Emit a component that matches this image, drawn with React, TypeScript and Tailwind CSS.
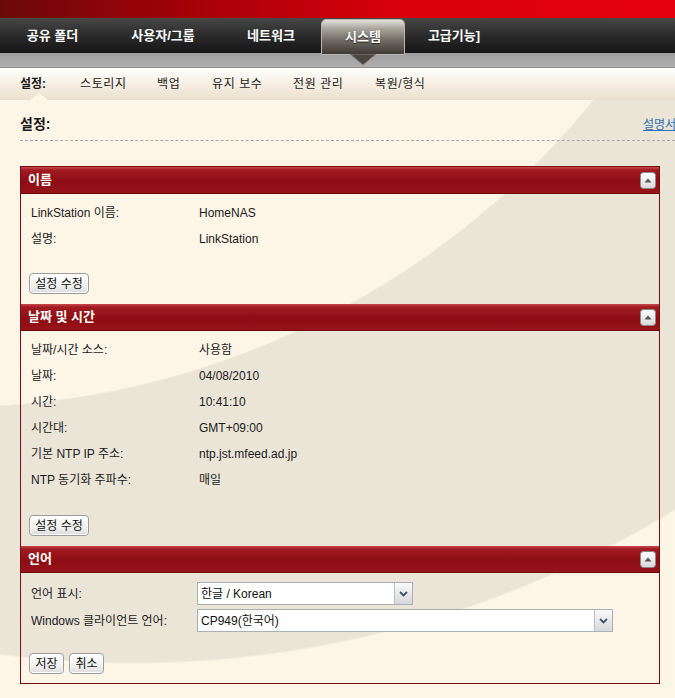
const navItems = [
  { label: "공유 폴더", w: "w-[105px]" },
  { label: "사용자/그룹", w: "w-[116px]" },
  { label: "네트워크", w: "w-[100px]" },
];

const subItems = [
  { label: "스토리지", w: "w-[77px]" },
  { label: "백업", w: "w-[55px]" },
  { label: "유지 보수", w: "w-[81px]" },
  { label: "전원 관리", w: "w-[82px]" },
  { label: "복원/형식", w: "w-[80px]" },
];

function CollapseButton() {
  return (
    <svg width="16" height="17" viewBox="0 0 16 17" className="shrink-0">
      <defs>
        <linearGradient id="cb" x1="0" y1="0" x2="0" y2="1">
          <stop offset="0" stopColor="#ffffff" />
          <stop offset="1" stopColor="#d9d9d9" />
        </linearGradient>
      </defs>
      <rect x="0.5" y="0.5" width="15" height="16" rx="3" fill="url(#cb)" stroke="#8a8a8a" />
      <path d="M4.5 10.5 L8 6.5 L11.5 10.5 Z" fill="#555" />
    </svg>
  );
}

function Button({ children, w }: { children: React.ReactNode; w: string }) {
  return (
    <button
      className={`${w} h-[21px] rounded-[4px] border border-[#9c9c9c] bg-[image:linear-gradient(#ffffff,#f1f1f1_60%,#dcdcdc)] text-[12px] leading-none text-[#111] shadow-[inset_0_0_0_1px_#fff]`}
    >
      {children}
    </button>
  );
}

function Select({ value, w }: { value: string; w: string }) {
  return (
    <div className={`${w} flex h-[23px] border border-[#a9b0b8] bg-white`}>
      <div className="flex flex-1 items-center pl-[3px] text-[12px] text-[#111]">{value}</div>
      <div className="flex w-[18px] items-center justify-center border-l border-[#b9bec4] bg-[image:linear-gradient(#fafafa,#d5d7da)]">
        <svg width="9" height="6" viewBox="0 0 9 6">
          <path d="M1 1 L4.5 4.5 L8 1" fill="none" stroke="#3f5468" strokeWidth="1.8" />
        </svg>
      </div>
    </div>
  );
}

function PanelHeader({ title }: { title: string }) {
  return (
    <div className="flex h-[27px] items-center justify-between border-b border-[#6d070b] bg-[image:linear-gradient(#c9494c_0px,#a21c22_3px,#8c0d13_55%,#97131a_100%)] pl-[7px] pr-[3px]">
      <span className="text-[13px] font-bold text-white">{title}</span>
      <CollapseButton />
    </div>
  );
}

function Row({ label, value }: { label: string; value: string }) {
  return (
    <div className="grid h-[26px] grid-cols-[168px_1fr] items-center text-[12px] text-[#1a1a1a]">
      <span>{label}</span>
      <span>{value}</span>
    </div>
  );
}

export default function App() {
  return (
    <div className="h-[698px] w-[675px] overflow-hidden bg-[#fdf6e7] font-['Liberation_Sans','Noto_Sans_CJK_KR',sans-serif]">
      {/* top red band */}
      <div className="h-[18px] bg-[image:linear-gradient(90deg,#6a0909_0%,#a80009_30%,#d9000c_60%,#e6000f_100%)]" />

      {/* main nav */}
      <div className="flex h-[35px] bg-[image:linear-gradient(#474747,#2b2b2b_50%,#151515)]">
        {navItems.map((n) => (
          <div key={n.label} className={`${n.w} flex items-center justify-center text-[13px] font-bold text-white`}>
            {n.label}
          </div>
        ))}
        <div className="relative mt-[1px] flex h-[36px] w-[84px] items-center justify-center rounded-t-[5px] border border-[#b9b7b0] bg-[image:linear-gradient(#e2e1dc,#a9a69e_25%,#6f6b63_60%,#3f3b35)] text-[13px] font-bold text-white [text-shadow:0_1px_1px_#222]">
          시스템
          <svg width="26" height="12" viewBox="0 0 26 12" className="absolute left-[28px] top-full">
            <path d="M0 0 L13 11 L26 0 Z" fill="#4a4640" stroke="#85827a" strokeWidth="1" />
          </svg>
        </div>
        <div className="flex w-[98px] items-center justify-center text-[13px] font-bold text-white">고급기능]</div>
      </div>

      {/* gray band */}
      <div className="h-[15px] border-b border-[#8f8f8f] bg-[image:linear-gradient(#9d9d9d,#b0b0b0)]" />

      {/* sub nav */}
      <div className="relative flex h-[32px] items-center bg-[image:linear-gradient(#ffffff,#f7f0e5_45%,#ebe0cd)] pl-[20px] text-[12px] text-[#1a1a1a]">
        <span className="w-[60px] font-bold">설정:</span>
        {subItems.map((s) => (
          <span key={s.label} className={`${s.w} tracking-[0.6px]`}>
            {s.label}
          </span>
        ))}
        <svg width="18" height="7" viewBox="0 0 18 7" className="absolute bottom-0 left-[30px]">
          <path d="M0 7 L9 0 L18 7 Z" fill="#fdf6e7" />
        </svg>
      </div>

      {/* content */}
      <div className="h-[598px] bg-[image:radial-gradient(circle_828px_at_-50px_-520px,#fdf6e7_99.8%,transparent_100%),radial-gradient(circle_1036px_at_133px_-472px,#ebe5d8_99.8%,#fdf6e7_100%)] pt-[14px]">
        <div className="ml-[20px] flex items-end justify-between">
          <span className="text-[14px] font-bold leading-[20px] text-[#1a1a1a]">설정:</span>
          <span className="w-[32px] overflow-hidden whitespace-nowrap text-[12px] text-[#2f6fb3] underline">설명서</span>
        </div>
        <div className="ml-[20px] mt-[6px] border-t border-dashed border-[#a8a8a8]" />

        <div className="ml-[20px] mr-[15px] mt-[25px] border border-[#7a0d10]">
          {/* 이름 */}
          <PanelHeader title="이름" />
          <div className="px-[10px] pb-[10px] pt-[6px]">
            <Row label="LinkStation 이름:" value="HomeNAS" />
            <Row label="설명:" value="LinkStation" />
            <div className="-ml-[2px] mt-[21px] flex">
              <Button w="w-[60px]">설정 수정</Button>
            </div>
          </div>

          {/* 날짜 및 시간 */}
          <PanelHeader title="날짜 및 시간" />
          <div className="px-[10px] pb-[10px] pt-[6px]">
            <Row label="날짜/시간 소스:" value="사용함" />
            <Row label="날짜:" value="04/08/2010" />
            <Row label="시간:" value="10:41:10" />
            <Row label="시간대:" value="GMT+09:00" />
            <Row label="기본 NTP IP 주소:" value="ntp.jst.mfeed.ad.jp" />
            <Row label="NTP 동기화 주파수:" value="매일" />
            <div className="-ml-[2px] mt-[22px] flex">
              <Button w="w-[60px]">설정 수정</Button>
            </div>
          </div>

          {/* 언어 */}
          <PanelHeader title="언어" />
          <div className="px-[10px] pb-[9px] pt-[9px]">
            <div className="grid grid-cols-[166px_1fr] items-center gap-y-[4px] text-[12px] text-[#1a1a1a]">
              <span>언어 표시:</span>
              <Select value="한글 / Korean" w="w-[216px]" />
              <span>Windows 클라이언트 언어:</span>
              <Select value="CP949(한국어)" w="w-[416px]" />
            </div>
            <div className="-ml-[2px] mt-[21px] flex gap-[5px]">
              <Button w="w-[35px]">저장</Button>
              <Button w="w-[35px]">취소</Button>
            </div>
          </div>
        </div>
      </div>
    </div>
  );
}
